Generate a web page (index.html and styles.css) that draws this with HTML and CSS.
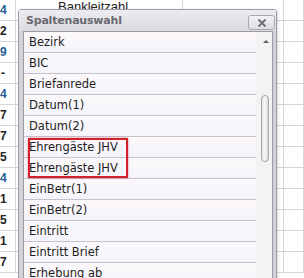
FILE: index.html
```html
<!DOCTYPE html>
<html lang="de">
<head>
    <meta charset="UTF-8">
    <title>Spaltenauswahl</title>
    <link rel="stylesheet" href="styles.css">
</head>
<body>
    <!-- spreadsheet behind the dialog -->
    <div class="sheet">
        <div class="cell num blue">4</div><div class="cell head">Bankleitzahl</div><div class="cell"></div><div class="cell"></div>
        <div class="cell num">2</div><div class="cell"></div><div class="cell"></div><div class="cell"></div>
        <div class="cell num blue">9</div><div class="cell"></div><div class="cell"></div><div class="cell"></div>
        <div class="cell num">-</div><div class="cell"></div><div class="cell"></div><div class="cell"></div>
        <div class="cell num blue">4</div><div class="cell"></div><div class="cell"></div><div class="cell"></div>
        <div class="cell num">7</div><div class="cell"></div><div class="cell"></div><div class="cell"></div>
        <div class="cell num">7</div><div class="cell"></div><div class="cell"></div><div class="cell"></div>
        <div class="cell num">5</div><div class="cell"></div><div class="cell"></div><div class="cell"></div>
        <div class="cell num blue">4</div><div class="cell"></div><div class="cell"></div><div class="cell"></div>
        <div class="cell num">1</div><div class="cell"></div><div class="cell"></div><div class="cell"></div>
        <div class="cell num">5</div><div class="cell"></div><div class="cell"></div><div class="cell"></div>
        <div class="cell num">1</div><div class="cell"></div><div class="cell"></div><div class="cell"></div>
        <div class="cell num">7</div><div class="cell"></div><div class="cell"></div><div class="cell"></div>
    </div>

    <div class="dialog">
        <div class="dialog-title">
            <span class="title-text">Spaltenauswahl</span>
            <button class="close-btn" type="button">
                <svg width="10" height="8" viewBox="0 0 10 8">
                    <path d="M1.5 0.5 L8.5 7.5 M8.5 0.5 L1.5 7.5" stroke="#6e6e76" stroke-width="2" fill="none"/>
                </svg>
            </button>
        </div>
        <div class="dialog-body">
            <div class="list">
                <div class="items">
                    <div class="item">Bezirk</div>
                    <div class="item">BIC</div>
                    <div class="item">Briefanrede</div>
                    <div class="item">Datum(1)</div>
                    <div class="item">Datum(2)</div>
                    <div class="item">Ehrengäste JHV</div>
                    <div class="item">Ehrengäste JHV</div>
                    <div class="item">EinBetr(1)</div>
                    <div class="item">EinBetr(2)</div>
                    <div class="item">Eintritt</div>
                    <div class="item">Eintritt Brief</div>
                    <div class="item">Erhebung ab</div>
                </div>
                <div class="scrollbar">
                    <div class="scroll-up"></div>
                    <div class="scroll-thumb"></div>
                </div>
            </div>
        </div>
        <!-- annotation marking the duplicate entry -->
        <div class="mark"></div>
    </div>
</body>
</html>
```

FILE: styles.css
```css
body {
    margin: 0;
    width: 304px;
    height: 278px;
    overflow: hidden;
    position: relative;
    background-color: #ffffff;
    font-family: "DejaVu Sans", Verdana, sans-serif;
}

.sheet {
    display: grid;
    grid-template-columns: 16px 167px 101px 20px;
    grid-auto-rows: 21px;
}

.cell {
    box-sizing: border-box;
    border-right: 1px solid #d6d6d6;
    border-bottom: 1px solid #d6d6d6;
    font-family: "Liberation Sans", Arial, sans-serif;
    font-size: 12px;
    line-height: 20px;
    color: #222;
    overflow: hidden;
    white-space: nowrap;
}

.num {
    text-align: right;
    padding-right: 10px;
    font-weight: bold;
}

.blue {
    color: #2a5d96;
}

.head {
    padding-left: 42px;
    line-height: 14px;
    font-size: 13px;
}

.dialog {
    position: absolute;
    left: 18px;
    top: 9px;
    width: 259px;
    height: 290px;
    box-sizing: border-box;
    border: 1px solid #9c9ca4;
    border-radius: 3px 3px 0 0;
    background-color: #d9d9de;
    box-shadow: 1px 1px 3px rgba(0, 0, 0, 0.15);
}

.dialog-title {
    height: 21px;
    display: flex;
    align-items: center;
    justify-content: space-between;
    padding-left: 7px;
    padding-right: 1px;
    background: linear-gradient(#ececf0, #dbdbe0);
}

.title-text {
    font-size: 11px;
    font-weight: bold;
    letter-spacing: -0.2px;
    color: #6a6a71;
}

.close-btn {
    width: 27px;
    height: 15px;
    margin-top: 4px;
    padding: 0;
    display: flex;
    align-items: center;
    justify-content: center;
    border: 1px solid #a9a9b1;
    border-radius: 3px;
    background: linear-gradient(#f4f4f6, #dedee2);
}

.dialog-body {
    padding: 0 3px 0 4px;
    background-color: #d3d3d9;
}

.list {
    display: flex;
    border: 1px solid #9a9aa2;
    background-color: #f3f3f4;
}

.items {
    width: 232px;
}

.item {
    height: 20px;
    line-height: 20px;
    padding-left: 5px;
    font-size: 11.5px;
    color: #1e1e1e;
    border-bottom: 1px solid #c6c2cc;
    background: linear-gradient(#fcf8fa, #f4f4fb);
    white-space: nowrap;
}

.scrollbar {
    width: 16px;
    display: flex;
    flex-direction: column;
    align-items: center;
    background-color: #f3f3f4;
}

.scroll-up {
    width: 0;
    height: 0;
    margin-top: 8px;
    margin-left: 3px;
    border-left: 3px solid transparent;
    border-right: 3px solid transparent;
    border-bottom: 3px solid #5e5e66;
}

.scroll-thumb {
    width: 8px;
    height: 67px;
    margin-top: 52px;
    margin-left: 1px;
    box-sizing: border-box;
    border: 1px solid #a4a4ac;
    border-radius: 4px;
    background: linear-gradient(to right, #e4e4e8, #f8f8fa, #d8d8dd);
}

.mark {
    position: absolute;
    left: 9px;
    top: 128px;
    width: 100px;
    height: 40px;
    box-sizing: border-box;
    border: 2px solid #d3212b;
    box-shadow: 0 0 2px rgba(160, 0, 0, 0.45);
}
```
